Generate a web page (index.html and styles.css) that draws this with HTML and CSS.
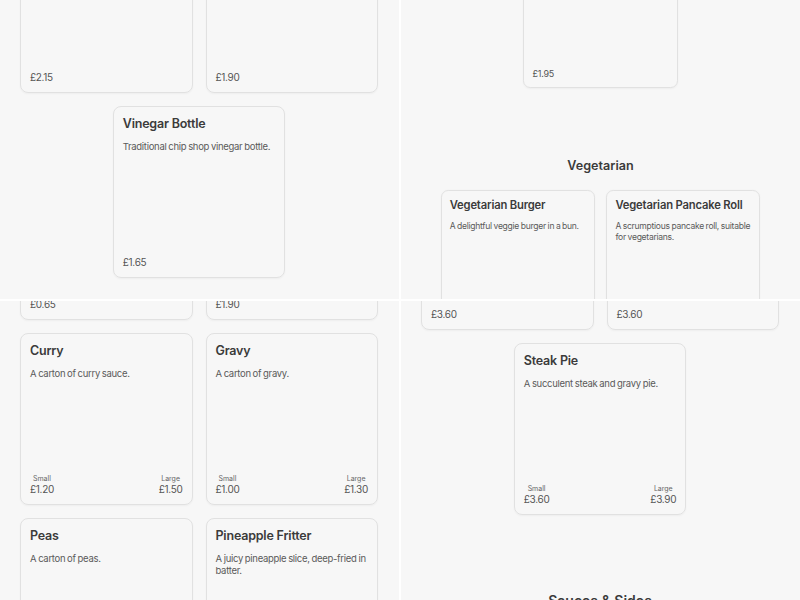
FILE: index.html
```html
<!DOCTYPE html>
<html lang="en">
<head>
    <meta charset="UTF-8">
    <title>Chip Shop Menu</title>

    <link rel="stylesheet" href="styles.css">
</head>
<body>

<main class="board">

    <!-- end of the sauces list -->
    <section class="tile tile-tl">
        <div class="page">
            <div class="grid">
                <div class="card">
                    <div class="price">£2.15</div>
                </div>
                <div class="card">
                    <div class="price">£1.90</div>
                </div>
                <div class="card">
                    <h3 class="card-title">Vinegar Bottle</h3>
                    <p class="card-desc">Traditional chip shop vinegar bottle.</p>
                    <div class="price">£1.65</div>
                </div>
            </div>
        </div>
    </section>

    <!-- vegetarian section, narrower window -->
    <section class="tile tile-tr">
        <div class="page">
            <div class="grid">
                <div class="card">
                    <div class="price">£1.95</div>
                </div>
            </div>

            <h2 class="section-title">Vegetarian</h2>

            <div class="grid">
                <div class="card">
                    <h3 class="card-title">Vegetarian Burger</h3>
                    <p class="card-desc">A delightful veggie burger in a bun.</p>
                    <div class="price">£3.60</div>
                </div>
                <div class="card">
                    <h3 class="card-title">Vegetarian Pancake Roll</h3>
                    <p class="card-desc">A scrumptious pancake roll, suitable for vegetarians.</p>
                    <div class="price">£3.60</div>
                </div>
            </div>
        </div>
    </section>

    <!-- sides -->
    <section class="tile tile-bl">
        <div class="page">
            <div class="grid">
                <div class="card">
                    <div class="price">£0.65</div>
                </div>
                <div class="card">
                    <div class="price">£1.90</div>
                </div>
                <div class="card">
                    <h3 class="card-title">Curry</h3>
                    <p class="card-desc">A carton of curry sauce.</p>
                    <div class="sizes">
                        <div class="size"><span class="size-label">Small</span>£1.20</div>
                        <div class="size"><span class="size-label">Large</span>£1.50</div>
                    </div>
                </div>
                <div class="card">
                    <h3 class="card-title">Gravy</h3>
                    <p class="card-desc">A carton of gravy.</p>
                    <div class="sizes">
                        <div class="size"><span class="size-label">Small</span>£1.00</div>
                        <div class="size"><span class="size-label">Large</span>£1.30</div>
                    </div>
                </div>
                <div class="card">
                    <h3 class="card-title">Peas</h3>
                    <p class="card-desc">A carton of peas.</p>
                </div>
                <div class="card">
                    <h3 class="card-title">Pineapple Fritter</h3>
                    <p class="card-desc">A juicy pineapple slice, deep-fried in batter.</p>
                </div>
            </div>
        </div>
    </section>

    <!-- end of vegetarian, start of sauces -->
    <section class="tile tile-br">
        <div class="page">
            <div class="grid">
                <div class="card">
                    <div class="price">£3.60</div>
                </div>
                <div class="card">
                    <div class="price">£3.60</div>
                </div>
                <div class="card">
                    <h3 class="card-title">Steak Pie</h3>
                    <p class="card-desc">A succulent steak and gravy pie.</p>
                    <div class="sizes">
                        <div class="size"><span class="size-label">Small</span>£3.60</div>
                        <div class="size"><span class="size-label">Large</span>£3.90</div>
                    </div>
                </div>
            </div>

            <h2 class="section-title">Sauces &amp; Sides</h2>
        </div>
    </section>

</main>

</body>
</html>
```

FILE: styles.css
```css
* {
    box-sizing: border-box;
}

body {
    margin: 0;
    background: #ffffff;
    font-family: Inter, "Liberation Sans", sans-serif;
    color: #3b3b3b;
}

.board {
    display: grid;
    grid-template-columns: 399px 399px;
    grid-template-rows: 299px 299px;
    gap: 2px;
    width: 800px;
    height: 600px;
}

.tile {
    background: #f7f7f7;
    overflow: hidden;
}

.page {
    padding: 0 21px 0 20px;
}

/* scrolled positions */
.tile-tl .page {
    margin-top: -79px;
}

.tile-tr .page {
    zoom: 0.9;
    padding: 0 44px;
    margin-top: -74px;
}

.tile-bl .page {
    margin-top: -153px;
}

.tile-br .page {
    margin-top: -143px;
}

.grid {
    display: flex;
    flex-wrap: wrap;
    justify-content: center;
    gap: 13px;
}

.card {
    width: calc(50% - 6.5px);
    height: 172px;
    border: 1px solid #e1e1e1;
    border-radius: 8px;
    padding: 9px 9px 8px;
    display: flex;
    flex-direction: column;
    box-shadow: 0 1px 2px rgba(0, 0, 0, 0.04);
}

.card-title {
    margin: 0;
    font-size: 12.5px;
    line-height: 15px;
    font-weight: 600;
    letter-spacing: -0.2px;
    color: #3b3b3b;
}

.card-desc {
    margin: 10px 0 0;
    font-size: 9.5px;
    line-height: 12px;
    letter-spacing: -0.3px;
    word-spacing: -0.5px;
    color: #5a5a5a;
}

.price {
    margin-top: auto;
    font-size: 10px;
    line-height: 13px;
    letter-spacing: -0.3px;
    color: #555555;
}

.sizes {
    margin-top: auto;
    display: flex;
    justify-content: space-between;
}

.size {
    display: flex;
    flex-direction: column;
    align-items: center;
    font-size: 10px;
    line-height: 13px;
    letter-spacing: -0.3px;
    color: #555555;
}

.size-label {
    font-size: 7px;
    line-height: 9px;
    letter-spacing: 0;
    color: #666666;
}

.section-title {
    margin: 76px 0 17px;
    text-align: center;
    font-size: 14px;
    line-height: 20px;
    font-weight: 600;
    color: #3b3b3b;
}
```
